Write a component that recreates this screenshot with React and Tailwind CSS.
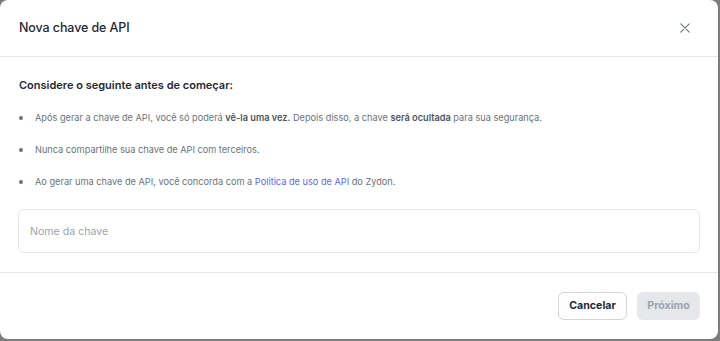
import React from 'react';

const tips = [
  <>
    Após gerar a chave de API, você só poderá <strong className="font-semibold text-[#4b5563]">vê-la uma vez.</strong> Depois disso, a chave{' '}
    <strong className="font-semibold text-[#4b5563]">será ocultada</strong> para sua segurança.
  </>,
  <>Nunca compartilhe sua chave de API com terceiros.</>,
  <>
    Ao gerar uma chave de API, você concorda com a{' '}
    <a href="#" className="text-[#6366f1]">Politica de uso de API</a> do Zydon.
  </>,
];

export default function App() {
  return (
    <div className="w-[720px] h-[341px] bg-[#7c7c7c] overflow-hidden" style={{ fontFamily: 'Inter, "Noto Sans", sans-serif' }}>
      <div className="w-[718px] h-[339px] bg-white rounded-lg flex flex-col">
        {/* Header */}
        <div className="h-[57px] flex items-center justify-between pl-[19px] pr-[28px] border-b border-[#e5e7eb] shrink-0">
          <h2 className="text-[12.5px] font-medium text-[#1f2937] tracking-[-0.1px]">Nova chave de API</h2>
          <button type="button" className="text-[#6b7280]">
            <svg className="w-[10px] h-[10px]" fill="none" viewBox="0 0 10 10" stroke="currentColor">
              <path strokeLinecap="round" strokeWidth={1.1} d="M0.8 0.8L9.2 9.2M9.2 0.8L0.8 9.2" />
            </svg>
          </button>
        </div>

        {/* Body */}
        <div className="px-[18px] pt-[21px] pb-[19px] border-b border-[#e5e7eb] shrink-0">
          <p className="text-[11px] font-semibold text-[#1f2937] pl-[1px] leading-[14px]">Considere o seguinte antes de começar:</p>
          <ul className="mt-[19px] flex flex-col gap-[19px]">
            {tips.map((tip, index) => (
              <li key={index} className="flex items-center text-[9.2px] text-[#6b7280] leading-[13px]">
                <span className="w-[4px] h-[4px] rounded-full bg-[#6b7280] ml-[1px] mr-[12px] shrink-0" />
                <span>{tip}</span>
              </li>
            ))}
          </ul>
          <input
            placeholder="Nome da chave"
            className="mt-[21px] w-full h-[44px] px-[11px] rounded-md border border-[#e5e7eb] text-[10.6px] text-[#1f2937] placeholder:text-[#9ca3af] outline-none"
          />
        </div>

        {/* Footer */}
        <div className="flex-1 flex items-start justify-end gap-[10px] pt-[19px] pr-[18px]">
          <button type="button" className="h-[28px] w-[69px] rounded-md border border-[#d1d5db] bg-white text-[10.6px] font-bold text-[#1f2937]">
            Cancelar
          </button>
          <button type="button" disabled className="h-[28px] w-[63px] rounded-md bg-[#e5e7eb] text-[10.6px] font-bold text-[#9ca3af]">
            Próximo
          </button>
        </div>
      </div>
    </div>
  );
}
